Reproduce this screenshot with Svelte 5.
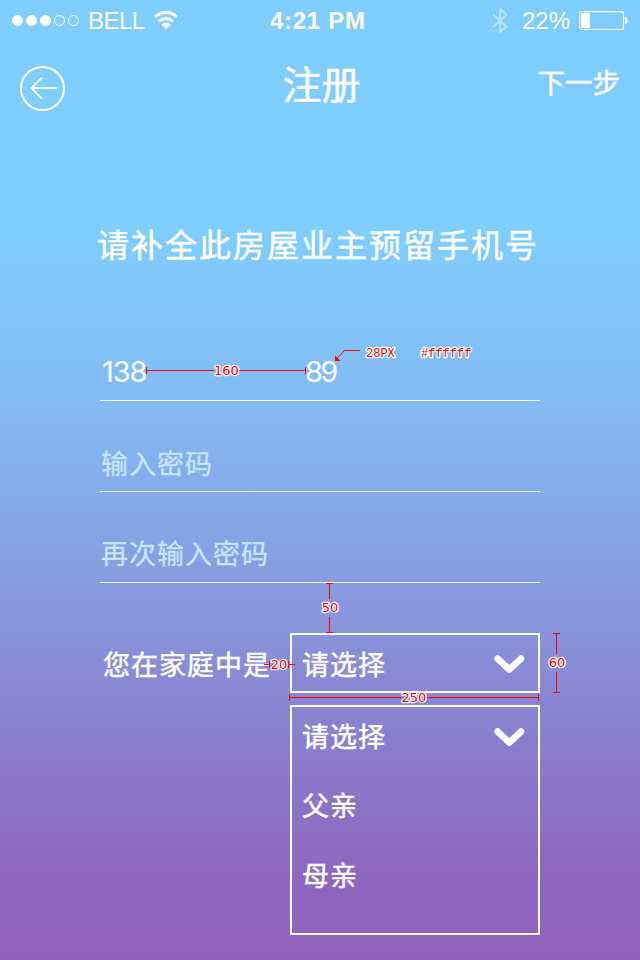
<script>
  const dots = [true, true, true, false, false];
  const options = ['父亲', '母亲'];
</script>

{#snippet chevron()}
  <svg class="chevron" width="32" height="20" viewBox="0 0 32 20">
    <path d="M4.6 4.6 L16.3 15.6 L28 4.6" fill="none" stroke="#fff" stroke-width="6.6" stroke-linecap="round" stroke-linejoin="round" />
  </svg>
{/snippet}

<main class="screen">
  <div class="status">
    <div class="signal">
      {#each dots as on}<i class:on></i>{/each}
    </div>
    <span class="carrier">BELL</span>
    <svg class="wifi" width="26" height="20" viewBox="0 0 26 20">
      <g fill="none" stroke="#fff" stroke-width="3.1">
        <path d="M2 7 Q13 -2.2 24 7" />
        <path d="M6 11.4 Q13 5.2 20 11.4" />
      </g>
      <path d="M8.2 14.6 Q13 10.4 17.8 14.6 L13 19.2 Z" fill="#fff" />
    </svg>
    <span class="time">4:21 PM</span>
    <svg class="bluetooth" width="16" height="27" viewBox="0 0 16 27">
      <path d="M1 7 L14.5 19.5 L8.2 25 V2 L14.5 7.7 L1 20" fill="none" stroke="#fff" stroke-width="1.8" />
    </svg>
    <span class="percent">22%</span>
    <svg class="battery" width="50" height="20" viewBox="0 0 50 20">
      <rect x="0.6" y="1.6" width="44" height="18" rx="2.6" fill="none" stroke="#fff" stroke-width="1.1" />
      <rect x="2" y="3" width="9" height="15" rx="1" fill="#fff" />
      <path d="M46 7 Q49 7.5 49 10.5 Q49 13.5 46 14 Z" fill="#fff" />
    </svg>
  </div>

  <header>
    <button class="back" aria-label="返回">
      <svg width="46" height="46" viewBox="0 0 46 46" fill="none" stroke="#fff">
        <circle cx="22.5" cy="22.5" r="21.5" stroke-width="2" />
        <path d="M37 22 H11.5 M22 11.8 L11.5 22 L22 32.8" stroke-width="1.9" />
      </svg>
    </button>
    <h1>注册</h1>
    <span class="next">下一步</span>
  </header>

  <h2>请补全此房屋业主预留手机号</h2>

  <form>
    <div class="field phone"><span>138</span><span>89</span></div>
    <div class="field hint">输入密码</div>
    <div class="field hint">再次输入密码</div>

    <div class="role">
      <span class="label">您在家庭中是</span>
      <div class="select"><span>请选择</span>{@render chevron()}</div>
    </div>
    <div class="menu">
      <div class="current"><span>请选择</span>{@render chevron()}</div>
      {#each options as option}<div class="option">{option}</div>{/each}
    </div>
  </form>

  <svg class="notes" width="640" height="960" viewBox="0 0 640 960">
    <g fill="none" stroke="#f00" stroke-width="1" shape-rendering="crispEdges">
      <path d="M146.5 367 V374 M147 370.5 H214 M239 370.5 H305 M305.5 367 V374" />
      <path d="M326 583.5 H333 M329.5 584 V599 M329.5 617 V632 M326 632.5 H333" />
      <path d="M264 664.5 H270 M269.5 661 V668 M288.5 661 V668 M289 664.5 H295" />
      <path d="M553 633.5 H560 M556.5 634 V654 M556.5 672 V692 M553 692.5 H560" />
      <path d="M289.5 694 V701 M290 697.5 H402 M427 697.5 H538 M538.5 694 V701" />
    </g>
    <path d="M360 350.5 H344.5 L337 358.5" fill="none" stroke="#f00" />
    <path d="M335 355.5 V361 H340.5 Z" fill="#f00" />
    <g class="measure" text-anchor="middle">
      <text x="226.5" y="375">160</text>
      <text x="330" y="612">50</text>
      <text x="279" y="669">20</text>
      <text x="557" y="667">60</text>
      <text x="414" y="702">250</text>
    </g>
    <g class="spec">
      <text x="366" y="357">28PX</text>
      <text x="421" y="357">#ffffff</text>
    </g>
  </svg>
</main>

<style>
  :global(body) { margin: 0; }
  .screen {
    position: relative;
    box-sizing: border-box;
    width: 640px;
    height: 960px;
    overflow: hidden;
    color: #fff;
    font-family: 'Liberation Sans', 'Noto Sans CJK SC', sans-serif;
    background: linear-gradient(#80cdff 0, #80cdff 230px, #83bbf4 400px, #879ce0 580px, #8a7fcf 735px, #8e64bf 890px, #8f61bc 960px);
  }
  .status {
    display: flex;
    align-items: center;
    height: 40px;
    padding-left: 12px;
    font-size: 24px;
    line-height: 40px;
    white-space: nowrap;
  }
  .status span { box-sizing: border-box; padding-top: 2px; }
  .signal { display: flex; gap: 3px; width: 76px; }
  .signal i {
    box-sizing: border-box;
    width: 11px;
    height: 11px;
    border: 1px solid #fff;
    border-radius: 50%;
  }
  .signal i.on { background: #fff; }
  .carrier { width: 65px; letter-spacing: -.5px; }
  .wifi { width: 26px; }
  .status .time { width: 313px; padding-left: 91px; font-weight: 700; letter-spacing: .7px; }
  .bluetooth { width: 16px; opacity: .45; }
  .status .percent { width: 71px; padding-left: 14px; }

  header {
    display: grid;
    grid-template-columns: 200px 1fr 200px;
    height: 90px;
    padding: 0 20px;
  }
  .back { justify-self: start; height: 46px; margin-top: 26px; padding: 0; border: 0; background: none; }
  .back svg { display: block; }
  h1, h2, .next, .label, .option, .select, .current { -webkit-text-stroke: .5px #fff; }
  h1 { margin: 18px 0 0 3px; text-align: center; font-size: 39px; font-weight: 400; line-height: 56px; }
  .next { margin-top: 24px; text-align: right; font-size: 27.5px; line-height: 40px; }
  h2 {
    height: 180px;
    margin: 0;
    padding: 91px 0 0 97px;
    box-sizing: border-box;
    font-size: 32px;
    font-weight: 400;
    line-height: 50px;
    letter-spacing: 2px;
    white-space: nowrap;
  }
  form { width: 440px; margin-left: 100px; }
  .field {
    box-sizing: border-box;
    height: 91px;
    border-bottom: 1px solid #fff;
    font-size: 27px;
    line-height: 40px;
    letter-spacing: 1px;
    padding-top: 43px;
  }
  .phone { display: flex; padding: 42px 0 0 2px; font-family: Inter, sans-serif; font-size: 29px; letter-spacing: -2.6px; }
  .phone span:first-child { width: 203px; letter-spacing: -1.1px; }
  .hint { padding-left: 1px; color: #c5e5ff; -webkit-text-stroke: .3px #c5e5ff; }
  .hint:nth-child(2) { padding-top: 44px; }
  .role { display: flex; height: 60px; margin-top: 50px; }
  .label { width: 187px; padding-left: 3px; font-size: 27px; line-height: 66px; letter-spacing: 1px; }
  .select, .menu { box-sizing: border-box; width: 250px; border: 2px solid #fff; font-size: 27px; letter-spacing: 1px; }
  .select, .current { display: flex; justify-content: space-between; align-items: center; padding: 0 13px 0 10px; }
  .chevron { position: relative; top: 1px; }
  .menu { height: 230px; margin: 12px 0 0 190px; }
  .current { height: 57px; }
  .option { height: 70px; padding-left: 10px; line-height: 87px; }

  .notes { position: absolute; inset: 0; }
  .notes text { fill: #f00; stroke: #fff; stroke-width: 2.6px; stroke-linejoin: round; paint-order: stroke; }
  .measure { font: 13px 'DejaVu Sans', sans-serif; }
  .spec { font: 12px 'Liberation Mono', monospace; }
</style>
